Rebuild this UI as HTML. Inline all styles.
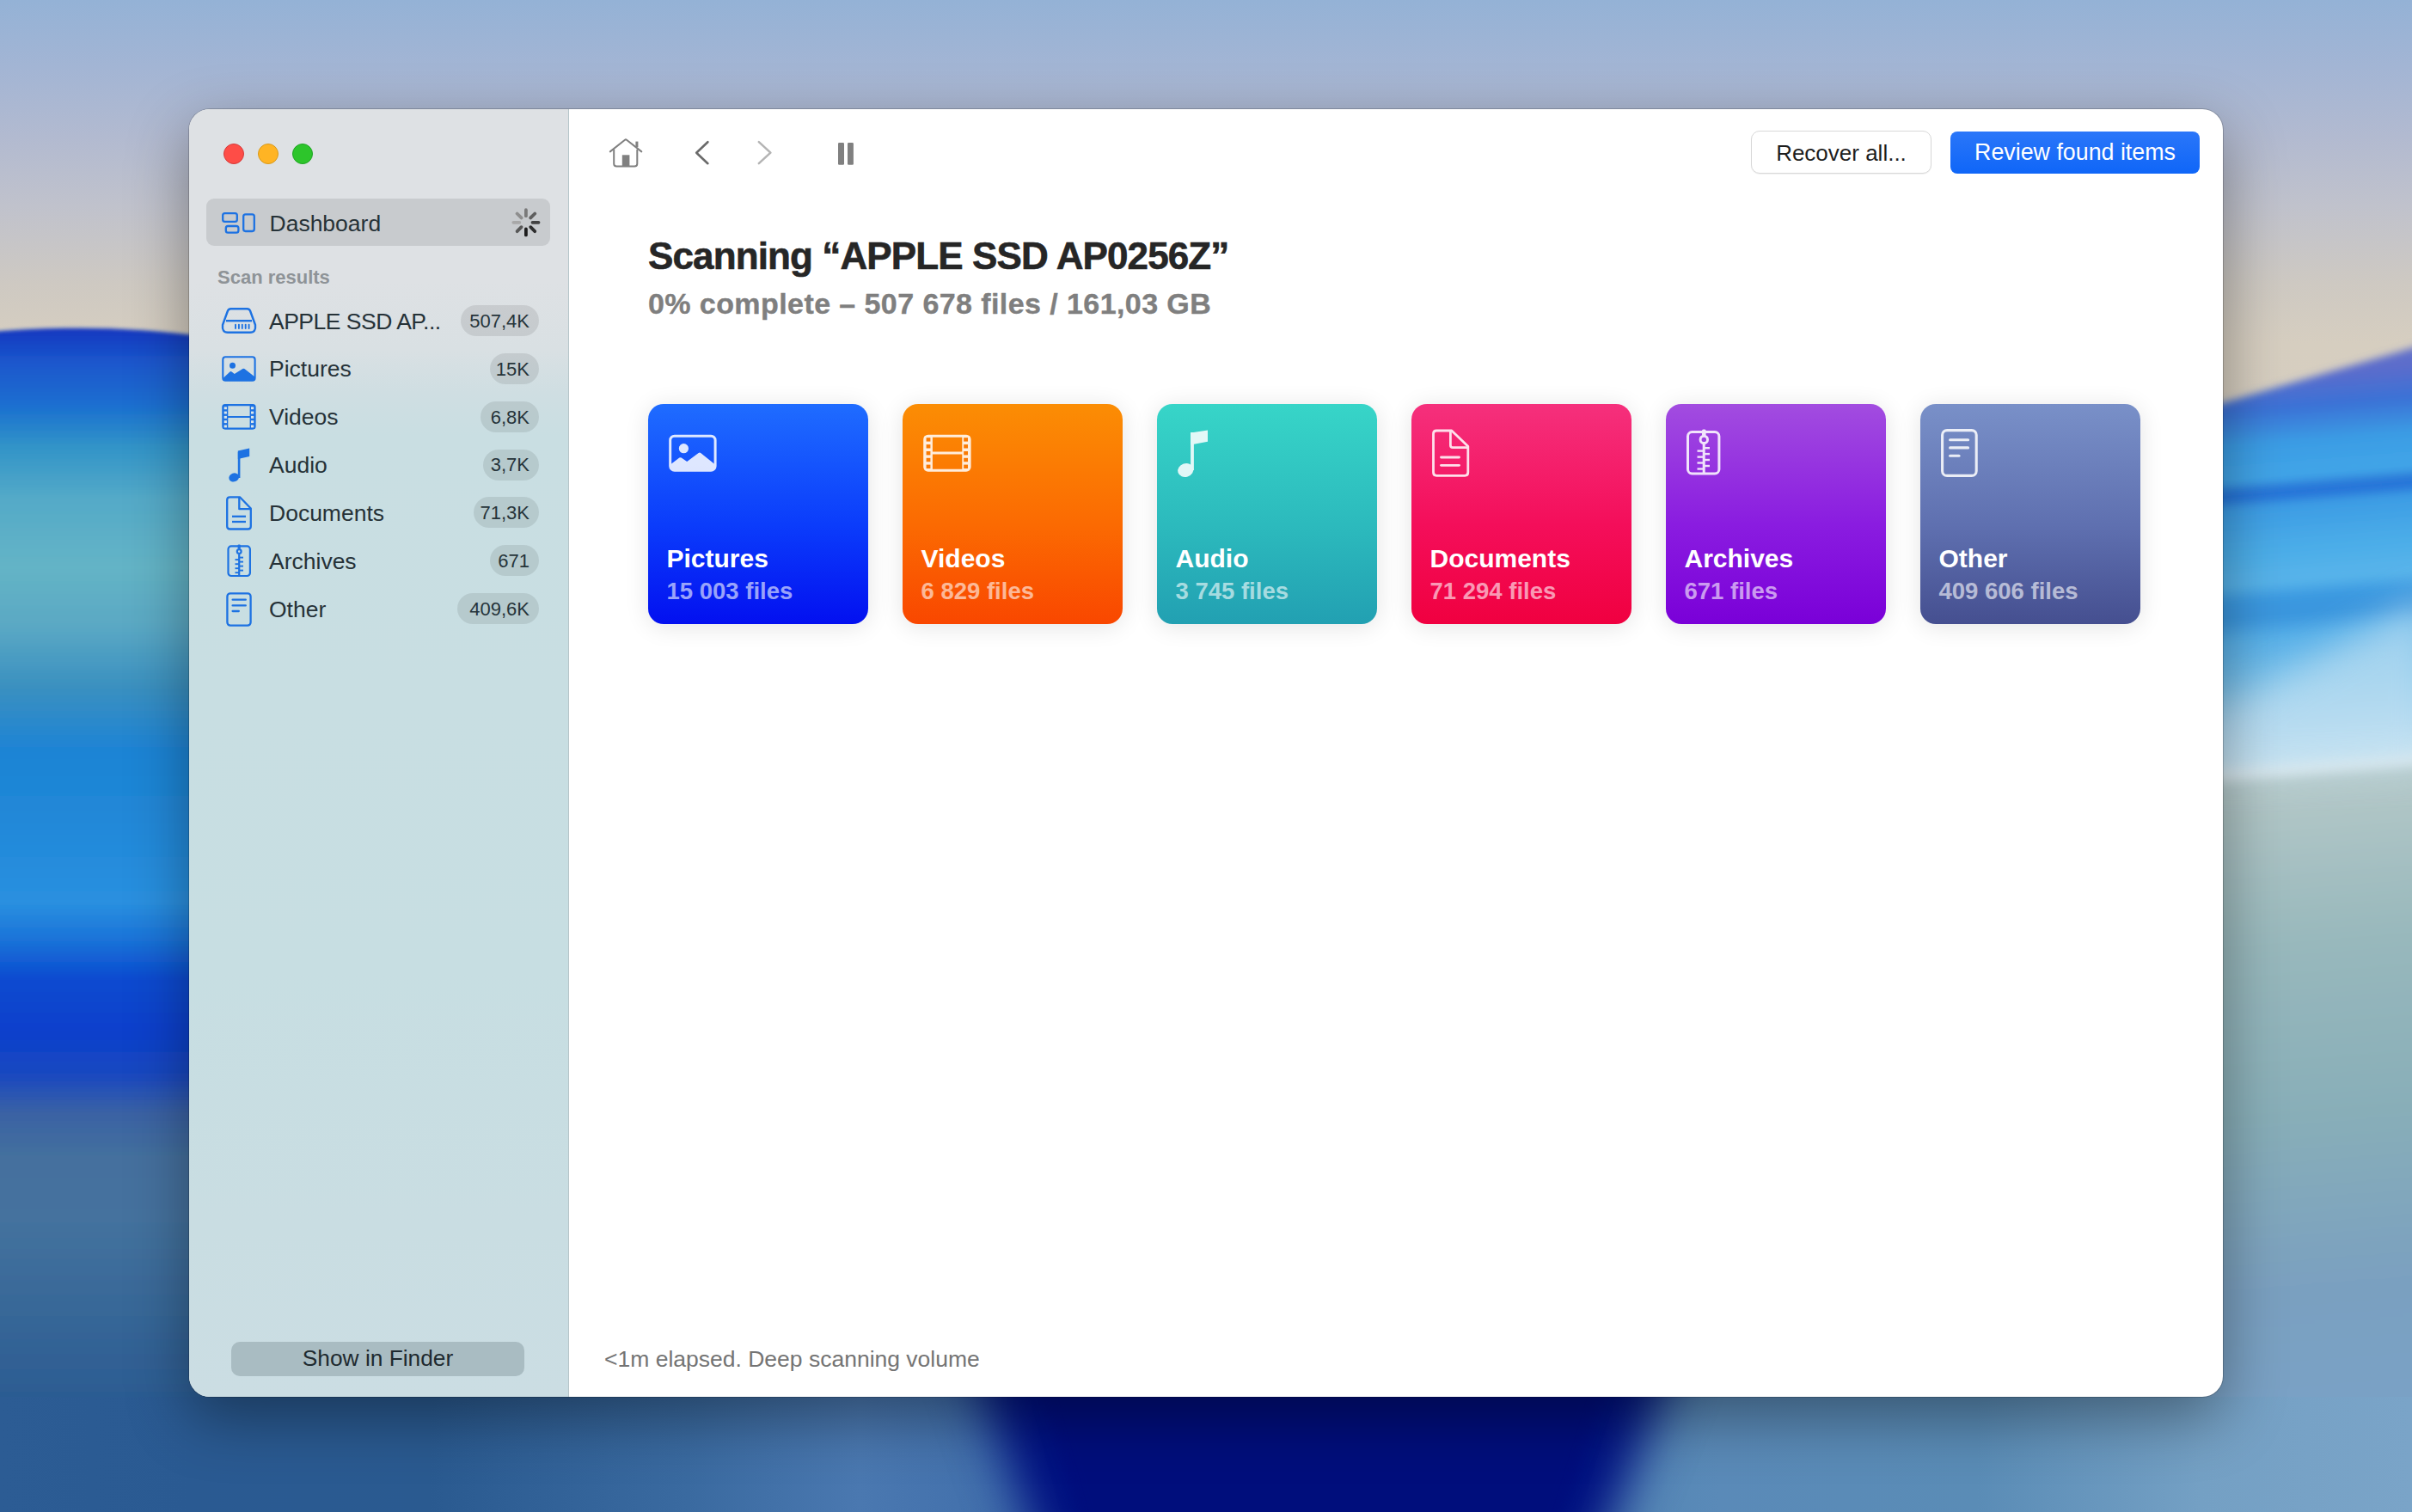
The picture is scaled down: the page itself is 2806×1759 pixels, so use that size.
<!DOCTYPE html>
<html><head><meta charset="utf-8">
<style>
*{margin:0;padding:0;box-sizing:border-box}
html,body{width:2806px;height:1759px;overflow:hidden;font-family:"Liberation Sans",sans-serif}
body{position:relative;background:#a8b8d2}
.abs{position:absolute}
.t{position:absolute;white-space:nowrap;line-height:1}
#wp-top{left:0;top:0;width:2806px;height:520px;background:linear-gradient(180deg,#93b1d6 0px,#a3b5d4 110px,#b4bbd0 190px,#c4c4cc 270px,#d4ccc0 370px,#d8cfc0 520px)}
#wp-left{left:0;top:383px;width:420px;height:1376px;background:linear-gradient(180deg,#1e3ec4 0px,#1b58cc 40px,#1a70d0 110px,#4aa0cc 220px,#64b2c6 300px,#5aa8c4 380px,#3690c8 470px,#2088d8 560px,#2a90e0 690px,#1a66d8 760px,#0a40d0 830px,#1a4cbc 900px,#3e6aa8 960px,#4a78a8 1040px,#3a6a9c 1160px,#2a5a90 1260px,#1f4e88 1376px)}
#wp-right{left:2400px;top:300px;width:406px;height:1459px;background:linear-gradient(180deg,#2a56d0 150px,#2a80e0 200px,#34a2e8 240px,#1a70d8 268px,#40a8e8 310px,#60b8e8 380px,#90cbee 500px,#bfe0f2 577px,#e6eef0 600px,#aec4c4 615px,#98b8bc 880px,#88aeb8 1080px,#7aa0c4 1280px,#7aa2ca 1459px);clip-path:polygon(0 169px,100% 105px,100% 100%,0 100%)}
#wp-bottom{left:0;top:1600px;width:2806px;height:159px;background:linear-gradient(90deg,#24528c 0px,#2a5a90 500px,#3a6aa0 900px,#4a78b0 1080px,#2a44a0 1150px,#041a88 1200px,#001080 1300px,#001080 1800px,#0a2090 1860px,#4a7ab0 1930px,#5a8ab8 2000px,#4a80a8 2300px,#7aa4c8 2806px)}
#win{left:220px;top:127px;width:2366px;height:1498px;border-radius:24px;overflow:hidden;background:#fff;box-shadow:0 0 0 1px rgba(0,0,0,.18),0 24px 70px rgba(0,0,0,.38)}
#side{left:0;top:0;width:442px;height:1498px;background:linear-gradient(180deg,#dee1e4 0px,#dee1e4 200px,#d9e0e3 280px,#cfdee2 330px,#c9dee2 380px,#c7dee2 1000px,#c9dde2 1300px,#cbdde3 1498px);border-right:1.5px solid #b6c5c9}
.tl{position:absolute;width:24px;height:24px;border-radius:50%;top:167px}
.badge{position:absolute;height:36px;border-radius:18px;background:rgba(0,0,0,.09)}
.card{position:absolute;top:470px;width:256px;height:256px;border-radius:18px;box-shadow:0 3px 28px rgba(0,0,0,.11)}
.btn{position:absolute}
svg{position:absolute;left:0;top:0}
</style></head>
<body>
<svg class="wp" width="2806" height="1759" viewBox="0 0 2806 1759" style="position:absolute;left:0;top:0"><defs><linearGradient id="gsky" gradientUnits="userSpaceOnUse" x1="0" y1="0" x2="0" y2="600"><stop offset="0.0000" stop-color="#94b2d6"/><stop offset="0.1333" stop-color="#a3b5d4"/><stop offset="0.2667" stop-color="#b2bad0"/><stop offset="0.4000" stop-color="#c0c2cc"/><stop offset="0.5500" stop-color="#cec9c2"/><stop offset="0.6667" stop-color="#d6cec0"/><stop offset="1.0000" stop-color="#d8cfc0"/></linearGradient><linearGradient id="gleft" gradientUnits="userSpaceOnUse" x1="0" y1="383" x2="0" y2="1759"><stop offset="0.0000" stop-color="#1838c0"/><stop offset="0.0269" stop-color="#1a56cc"/><stop offset="0.0632" stop-color="#1a6ed0"/><stop offset="0.0996" stop-color="#3294c8"/><stop offset="0.1432" stop-color="#54aac8"/><stop offset="0.2013" stop-color="#64b4c6"/><stop offset="0.2522" stop-color="#5aa8c4"/><stop offset="0.3031" stop-color="#3a90c0"/><stop offset="0.3539" stop-color="#1f84d4"/><stop offset="0.4121" stop-color="#2088d8"/><stop offset="0.4847" stop-color="#2a90e0"/><stop offset="0.5174" stop-color="#1a72d8"/><stop offset="0.5501" stop-color="#0a4ad0"/><stop offset="0.5938" stop-color="#0a40cc"/><stop offset="0.6301" stop-color="#1a48c0"/><stop offset="0.6628" stop-color="#3a62a4"/><stop offset="0.6991" stop-color="#44709e"/><stop offset="0.7536" stop-color="#44729e"/><stop offset="0.8263" stop-color="#386898"/><stop offset="0.9026" stop-color="#2c5c92"/><stop offset="1.0000" stop-color="#24528c"/></linearGradient><linearGradient id="gright" gradientUnits="userSpaceOnUse" x1="2586" y1="405" x2="2694" y2="1759"><stop offset="0.0000" stop-color="#6a74c6"/><stop offset="0.0295" stop-color="#5a6ccc"/><stop offset="0.0554" stop-color="#3a72d6"/><stop offset="0.0849" stop-color="#3a9ce4"/><stop offset="0.1145" stop-color="#42a6e8"/><stop offset="0.1226" stop-color="#2a7ad8"/><stop offset="0.1292" stop-color="#2470d8"/><stop offset="0.1381" stop-color="#3c9ce4"/><stop offset="0.1736" stop-color="#4aace8"/><stop offset="0.2031" stop-color="#58b4ea"/><stop offset="0.2179" stop-color="#3a98e0"/><stop offset="0.2326" stop-color="#3a96de"/><stop offset="0.2511" stop-color="#58b0e8"/><stop offset="0.2917" stop-color="#78c0ea"/><stop offset="0.3287" stop-color="#a0d0ee"/><stop offset="0.3523" stop-color="#c2e0f0"/><stop offset="0.3641" stop-color="#dfe9ec"/><stop offset="0.3744" stop-color="#b4c8c8"/><stop offset="0.5133" stop-color="#98b8bc"/><stop offset="0.6610" stop-color="#88aeb8"/><stop offset="0.8087" stop-color="#7aa0c0"/><stop offset="1.0000" stop-color="#7aa2ca"/></linearGradient><linearGradient id="gbot" gradientUnits="userSpaceOnUse" x1="0" y1="0" x2="2806" y2="0"><stop offset="0.0000" stop-color="#2c5c94"/><stop offset="0.0784" stop-color="#2a5a92"/><stop offset="0.1782" stop-color="#2a5a90"/><stop offset="0.2851" stop-color="#3a6aa0"/><stop offset="0.3564" stop-color="#4a78b0"/><stop offset="0.4633" stop-color="#3a68a8"/><stop offset="0.6058" stop-color="#4a80b0"/><stop offset="0.7128" stop-color="#5a8ab8"/><stop offset="0.8197" stop-color="#5a8cb6"/><stop offset="0.9123" stop-color="#74a0c4"/><stop offset="1.0000" stop-color="#7aa4c8"/></linearGradient><filter id="b2" x="-10%" y="-10%" width="120%" height="120%"><feGaussianBlur stdDeviation="2"/></filter><filter id="b5" x="-10%" y="-10%" width="120%" height="120%"><feGaussianBlur stdDeviation="5"/></filter><filter id="b20" x="-30%" y="-30%" width="160%" height="160%"><feGaussianBlur stdDeviation="22"/></filter><linearGradient id="gfade" gradientUnits="userSpaceOnUse" x1="0" y1="1605" x2="0" y2="1665"><stop offset="0" stop-color="#fff" stop-opacity="0"/><stop offset="1" stop-color="#fff" stop-opacity="1"/></linearGradient><mask id="mfade" maskUnits="userSpaceOnUse" x="-50" y="1500" width="2950" height="300"><rect x="-50" y="1500" width="2950" height="300" fill="url(#gfade)"/></mask><filter id="b30" x="-30%" y="-50%" width="160%" height="200%"><feGaussianBlur stdDeviation="32"/></filter></defs><rect x="0" y="0" width="2806" height="1759" fill="url(#gsky)"/><rect x="-20" y="1450" width="2850" height="330" fill="url(#gbot)"/><path d="M-20 387 C 60 379, 160 380, 240 392 L 1000 470 L 1000 1800 L -20 1800 Z" fill="url(#gleft)" filter="url(#b2)"/><path d="M2100 610 L 2830 398 L 2830 1800 L 2100 1800 Z" fill="url(#gright)" filter="url(#b5)"/><rect x="-20" y="1625" width="2850" height="160" fill="url(#gbot)"/></svg>
<div style="position:absolute;left:900px;top:1400px;width:1300px;height:500px;filter:blur(28px)"><div style="position:absolute;left:0;top:0;width:1300px;height:500px;background:#001080;clip-path:polygon(215px 140px,1065px 140px,955px 420px,315px 420px)"></div></div>
<div style="position:absolute;left:900px;top:1400px;width:1300px;height:500px;filter:blur(8px)"><div style="position:absolute;left:0;top:0;width:1300px;height:500px;background:#000e7c;clip-path:polygon(300px 160px,980px 160px,900px 420px,370px 420px)"></div></div>
<div style="position:absolute;left:2400px;top:600px;width:500px;height:400px;filter:blur(22px);opacity:.65"><div style="position:absolute;left:0;top:0;width:500px;height:400px;background:#c4e2f2;clip-path:polygon(160px 240px,430px 90px,430px 290px,160px 300px)"></div></div>
<div id="win" class="abs">
  <div id="side" class="abs"></div>
</div>
<div class="tl" style="left:260px;background:#fe4d47;border:1px solid #d53a3a"></div>
<div class="tl" style="left:300px;background:#ffb424;border:1px solid #d99a1a"></div>
<div class="tl" style="left:340px;background:#2dc52b;border:1px solid #1ea523"></div>
<div class="abs" style="left:240px;top:231px;width:400px;height:55px;border-radius:9px;background:#c8cbce"></div>
<div class="t " style="left:313.50px;top:246.87px;font-size:26.5px;color:#263238;">Dashboard</div>
<div class="t " style="left:253.00px;top:312.08px;font-size:22px;color:#8e9397;font-weight:bold;">Scan results</div>
<div class="t " style="left:313.00px;top:360.57px;font-size:26.5px;color:#263238;letter-spacing:-0.5px;">APPLE SSD AP...</div>
<div class="badge" style="left:536px;top:355.00px;width:91px"></div>
<div class="t " style="left:0.00px;top:362.88px;font-size:22px;color:#26343a;right:2190px;left:auto;">507,4K</div>
<div class="t " style="left:313.00px;top:416.42px;font-size:26.5px;color:#263238;">Pictures</div>
<div class="badge" style="left:570px;top:410.85px;width:57px"></div>
<div class="t " style="left:0.00px;top:418.73px;font-size:22px;color:#26343a;right:2190px;left:auto;">15K</div>
<div class="t " style="left:313.00px;top:472.27px;font-size:26.5px;color:#263238;">Videos</div>
<div class="badge" style="left:559px;top:466.70px;width:68px"></div>
<div class="t " style="left:0.00px;top:474.58px;font-size:22px;color:#26343a;right:2190px;left:auto;">6,8K</div>
<div class="t " style="left:313.00px;top:528.12px;font-size:26.5px;color:#263238;">Audio</div>
<div class="badge" style="left:562px;top:522.55px;width:65px"></div>
<div class="t " style="left:0.00px;top:530.43px;font-size:22px;color:#26343a;right:2190px;left:auto;">3,7K</div>
<div class="t " style="left:313.00px;top:583.97px;font-size:26.5px;color:#263238;">Documents</div>
<div class="badge" style="left:551px;top:578.40px;width:76px"></div>
<div class="t " style="left:0.00px;top:586.28px;font-size:22px;color:#26343a;right:2190px;left:auto;">71,3K</div>
<div class="t " style="left:313.00px;top:639.82px;font-size:26.5px;color:#263238;">Archives</div>
<div class="badge" style="left:570px;top:634.25px;width:57px"></div>
<div class="t " style="left:0.00px;top:642.13px;font-size:22px;color:#26343a;right:2190px;left:auto;">671</div>
<div class="t " style="left:313.00px;top:695.67px;font-size:26.5px;color:#263238;">Other</div>
<div class="badge" style="left:532px;top:690.10px;width:95px"></div>
<div class="t " style="left:0.00px;top:697.98px;font-size:22px;color:#26343a;right:2190px;left:auto;">409,6K</div>
<div class="abs" style="left:269px;top:1561px;width:341px;height:40px;border-radius:10px;background:#a9bcc2"></div>
<div class="t " style="left:0.00px;top:1566.54px;font-size:26.3px;color:#1e2a30;left:269px;width:341px;text-align:center;">Show in Finder</div>
<div class="t " style="left:754.00px;top:275.75px;font-size:44px;color:#262626;font-weight:bold;letter-spacing:-0.88px;-webkit-text-stroke:0.6px #262626;">Scanning “APPLE SSD AP0256Z”</div>
<div class="t " style="left:754.00px;top:335.72px;font-size:34px;color:#7f7f7f;font-weight:bold;letter-spacing:0.42px;-webkit-text-stroke:0.4px #7f7f7f;">0% complete – 507 678 files / 161,03 GB</div>
<div class="abs" style="left:2037px;top:152px;width:210px;height:50px;border-radius:10px;background:#fff;border:1px solid #d8d8d8;box-shadow:0 1px 1px rgba(0,0,0,.06)"></div>
<div class="t " style="left:0.00px;top:164.79px;font-size:26px;color:#1e1e1e;left:2037px;width:210px;text-align:center;">Recover all...</div>
<div class="abs" style="left:2269px;top:153px;width:290px;height:49px;border-radius:8px;background:linear-gradient(180deg,#2a76f9,#0f66f8)"></div>
<div class="t " style="left:0.00px;top:164.31px;font-size:26.8px;color:#ffffff;left:2269px;width:290px;text-align:center;">Review found items</div>
<div class="t " style="left:703.00px;top:1568.07px;font-size:26.5px;color:#747474;">&lt;1m elapsed. Deep scanning volume</div>
<div class="card" style="left:754px;background:linear-gradient(180deg,#1f6cff 0%,#0b3cfb 55%,#0310f0 100%)"></div>
<div class="t " style="left:775.50px;top:635.31px;font-size:30px;color:#ffffff;font-weight:bold;">Pictures</div>
<div class="t " style="left:775.50px;top:673.72px;font-size:27.5px;color:rgba(255,255,255,.6);font-weight:bold;">15 003 files</div>
<div class="card" style="left:1050px;background:linear-gradient(180deg,#fb8d04 0%,#fb6a02 55%,#f94700 100%)"></div>
<div class="t " style="left:1071.50px;top:635.31px;font-size:30px;color:#ffffff;font-weight:bold;">Videos</div>
<div class="t " style="left:1071.50px;top:673.72px;font-size:27.5px;color:rgba(255,255,255,.6);font-weight:bold;">6 829 files</div>
<div class="card" style="left:1346px;background:linear-gradient(180deg,#37d5c8 0%,#2cbabd 55%,#22a0b2 100%)"></div>
<div class="t " style="left:1367.50px;top:635.31px;font-size:30px;color:#ffffff;font-weight:bold;">Audio</div>
<div class="t " style="left:1367.50px;top:673.72px;font-size:27.5px;color:rgba(255,255,255,.6);font-weight:bold;">3 745 files</div>
<div class="card" style="left:1642px;background:linear-gradient(180deg,#f5307c 0%,#f40e5a 55%,#f00040 100%)"></div>
<div class="t " style="left:1663.50px;top:635.31px;font-size:30px;color:#ffffff;font-weight:bold;">Documents</div>
<div class="t " style="left:1663.50px;top:673.72px;font-size:27.5px;color:rgba(255,255,255,.6);font-weight:bold;">71 294 files</div>
<div class="card" style="left:1938px;background:linear-gradient(180deg,#a24ce0 0%,#8a1ce0 55%,#7a00d8 100%)"></div>
<div class="t " style="left:1959.50px;top:635.31px;font-size:30px;color:#ffffff;font-weight:bold;">Archives</div>
<div class="t " style="left:1959.50px;top:673.72px;font-size:27.5px;color:rgba(255,255,255,.6);font-weight:bold;">671 files</div>
<div class="card" style="left:2234px;background:linear-gradient(180deg,#7990c8 0%,#5f70b0 55%,#454f90 100%)"></div>
<div class="t " style="left:2255.50px;top:635.31px;font-size:30px;color:#ffffff;font-weight:bold;">Other</div>
<div class="t " style="left:2255.50px;top:673.72px;font-size:27.5px;color:rgba(255,255,255,.6);font-weight:bold;">409 606 files</div>
<svg width="2806" height="1759" viewBox="0 0 2806 1759"><g fill="none" stroke="#1d72e2" stroke-width="2.3"><rect x="259.2" y="248.2" width="16.6" height="9.6" rx="2.4"/><rect x="262.8" y="263" width="14.6" height="7.6" rx="2.4"/><rect x="283.2" y="249.4" width="12.6" height="19.6" rx="2.4"/></g><line x1="611.90" y1="266.40" x2="611.90" y2="273.40" stroke="#1e1e1e" stroke-width="3.8" stroke-linecap="round"/><line x1="617.27" y1="264.17" x2="622.22" y2="269.12" stroke="#2e2e2e" stroke-width="3.8" stroke-linecap="round"/><line x1="619.50" y1="258.80" x2="626.50" y2="258.80" stroke="#424242" stroke-width="3.8" stroke-linecap="round"/><line x1="617.27" y1="253.43" x2="622.22" y2="248.48" stroke="#5e5e5e" stroke-width="3.8" stroke-linecap="round"/><line x1="611.90" y1="251.20" x2="611.90" y2="244.20" stroke="#7a7a7a" stroke-width="3.8" stroke-linecap="round"/><line x1="606.53" y1="253.43" x2="601.58" y2="248.48" stroke="#8e8e8e" stroke-width="3.8" stroke-linecap="round"/><line x1="604.30" y1="258.80" x2="597.30" y2="258.80" stroke="#a8a8a8" stroke-width="3.8" stroke-linecap="round"/><line x1="606.53" y1="264.17" x2="601.58" y2="269.12" stroke="#585858" stroke-width="3.8" stroke-linecap="round"/><g fill="none" stroke="#1d72e2" stroke-width="2.4" stroke-linejoin="round"><path d="M268.5 359.2 L287.5 359.2 Q290 359.2 291 361.5 L297 378 Q298 386.8 291 386.8 L265 386.8 Q258 386.8 259 378 L265 361.5 Q266 359.2 268.5 359.2 Z"/><line x1="263" y1="373.2" x2="293" y2="373.2"/></g><g stroke="#1d72e2" stroke-width="1.9" stroke-linecap="round"><line x1="274" y1="377.8" x2="274" y2="382"/><line x1="277.9" y1="377.8" x2="277.9" y2="382"/><line x1="281.8" y1="377.8" x2="281.8" y2="382"/><line x1="285.7" y1="377.8" x2="285.7" y2="382"/><line x1="289.6" y1="377.8" x2="289.6" y2="382"/></g><rect x="259.3" y="415.3" width="37.3" height="27.4" rx="3" fill="none" stroke="#1d72e2" stroke-width="2.1"/><circle cx="270.5" cy="425.2" r="3.5" fill="#1d72e2"/><path d="M259.5 440 L267.5 432.4 Q268.5 431.6 269.5 432.4 L272.8 435 L282.4 429 Q283.4 428.4 284.4 429 L296.5 438.6 L296.5 440.5 Q296.5 443 294 443 L262 443 Q259.5 443 259.5 440.5 Z" fill="#1d72e2"/><rect x="259.3" y="471.1" width="37.3" height="27.5" rx="2.5" fill="none" stroke="#1d72e2" stroke-width="2.1"/><rect x="259.3" y="471.1" width="6" height="27.5" fill="#1d72e2"/><rect x="290.6" y="471.1" width="6" height="27.5" fill="#1d72e2"/><line x1="265" y1="485" x2="291" y2="485" stroke="#1d72e2" stroke-width="2"/><rect x="260.7" y="473.3" width="3.2" height="2.9" fill="#dbe6ea"/><rect x="292" y="473.3" width="3.2" height="2.9" fill="#dbe6ea"/><rect x="260.7" y="478.6" width="3.2" height="2.9" fill="#dbe6ea"/><rect x="292" y="478.6" width="3.2" height="2.9" fill="#dbe6ea"/><rect x="260.7" y="483.9" width="3.2" height="2.9" fill="#dbe6ea"/><rect x="292" y="483.9" width="3.2" height="2.9" fill="#dbe6ea"/><rect x="260.7" y="489.2" width="3.2" height="2.9" fill="#dbe6ea"/><rect x="292" y="489.2" width="3.2" height="2.9" fill="#dbe6ea"/><rect x="260.7" y="494.5" width="3.2" height="2.9" fill="#dbe6ea"/><rect x="292" y="494.5" width="3.2" height="2.9" fill="#dbe6ea"/><ellipse cx="272.2" cy="555.4" rx="6" ry="5" transform="rotate(-20 272.2 555.4)" fill="#1d72e2"/><rect x="276.8" y="526" width="2.6" height="30" fill="#1d72e2"/><path d="M276.8 524.4 L290.2 521.4 L290.2 531 L276.8 534 Z" fill="#1d72e2"/><g fill="none" stroke="#1d72e2" stroke-width="2.3" stroke-linejoin="round"><path d="M279 578.3 L267.5 578.3 Q264.2 578.3 264.2 581.6 L264.2 612.2 Q264.2 615.5 267.5 615.5 L288.5 615.5 Q291.8 615.5 291.8 612.2 L291.8 591.5 Z"/><path d="M278.3 578.5 L278.3 592.2 L291.6 592.2"/><line x1="270" y1="600.8" x2="286" y2="600.8"/><line x1="270" y1="607" x2="286" y2="607"/></g><g fill="none" stroke="#1d72e2" stroke-width="2.2"><rect x="265.5" y="635.4" width="25.4" height="34.6" rx="3.5"/><line x1="278.2" y1="645" x2="278.2" y2="670"/><circle cx="278.2" cy="641.6" r="2.4"/></g><rect x="276.6" y="633.5" width="3.2" height="5" rx="1" fill="#1d72e2"/><g stroke="#1d72e2" stroke-width="1.9"><line x1="273.5" y1="651.1" x2="278.2" y2="651.1"/><line x1="273.5" y1="656.2" x2="278.2" y2="656.2"/><line x1="273.5" y1="661.2" x2="278.2" y2="661.2"/><line x1="273.5" y1="666.2" x2="278.2" y2="666.2"/><line x1="278.2" y1="648.6" x2="283" y2="648.6"/><line x1="278.2" y1="653.6" x2="283" y2="653.6"/><line x1="278.2" y1="658.6" x2="283" y2="658.6"/><line x1="278.2" y1="663.6" x2="283" y2="663.6"/></g><g fill="none" stroke="#1d72e2" stroke-width="2.3" stroke-linecap="round"><rect x="264.4" y="690.4" width="27.2" height="37.2" rx="3.5"/><line x1="270.6" y1="697.7" x2="285.8" y2="697.7"/><line x1="270.6" y1="704.4" x2="285.8" y2="704.4"/><line x1="270.6" y1="711" x2="277.8" y2="711"/></g><g fill="none" stroke="#808080" stroke-width="2" stroke-linecap="round" stroke-linejoin="round"><path d="M709.8 176.4 L727 162.8 Q728 162 729 162.8 L746.3 176.4"/><path d="M714.2 174.5 L714.2 190.5 Q714.2 193.6 717.3 193.6 L738.2 193.6 Q741.3 193.6 741.3 190.5 L741.3 174.5"/></g><rect x="723.8" y="180.3" width="8.6" height="13" fill="#808080"/><rect x="739.4" y="164.6" width="3" height="6.5" fill="#808080"/><path d="M823.4 165.2 L810.2 177.7 L823.4 190.2" fill="none" stroke="#6a6a6a" stroke-width="2.6" stroke-linecap="round" stroke-linejoin="round"/><path d="M882.8 165.2 L896.4 177.7 L882.8 190.2" fill="none" stroke="#b4b4b4" stroke-width="2.5" stroke-linecap="round" stroke-linejoin="round"/><rect x="975" y="166.1" width="7" height="25.7" rx="1.2" fill="#808080"/><rect x="986" y="166.1" width="6.9" height="25.7" rx="1.2" fill="#808080"/><g opacity=".86"><g transform="translate(0 0)"><rect x="779.7" y="507.2" width="52.4" height="40" rx="5" fill="none" stroke="#ffffff" stroke-width="3"/><circle cx="795.4" cy="521.7" r="5.6" fill="#ffffff"/><path d="M780.5 540 L790.3 532.6 Q791.5 531.8 792.7 532.6 L799.2 537.1 L812.6 527 Q813.9 526.2 815.2 527 L831.4 540 L831.4 542.5 Q831.4 547.5 826.4 547.5 L785.5 547.5 Q780.5 547.5 780.5 542.5 Z" fill="#ffffff"/></g><g transform="translate(-296 0)"></g><rect x="1075.7" y="507.2" width="52.4" height="40" rx="4" fill="none" stroke="#ffffff" stroke-width="3"/><rect x="1075.7" y="507.2" width="9.2" height="40" fill="#ffffff"/><rect x="1119.3" y="507.2" width="8.8" height="40" fill="#ffffff"/><line x1="1084" y1="527" x2="1120" y2="527" stroke="#ffffff" stroke-width="3"/><rect x="1077.6" y="509.2" width="4.8" height="4.4" fill="#fa7a03"/><rect x="1121.2" y="509.2" width="4.8" height="4.4" fill="#fa7a03"/><rect x="1077.6" y="517.1" width="4.8" height="4.4" fill="#fa7a03"/><rect x="1121.2" y="517.1" width="4.8" height="4.4" fill="#fa7a03"/><rect x="1077.6" y="525" width="4.8" height="4.4" fill="#fa7a03"/><rect x="1121.2" y="525" width="4.8" height="4.4" fill="#fa7a03"/><rect x="1077.6" y="532.8" width="4.8" height="4.4" fill="#fa7a03"/><rect x="1121.2" y="532.8" width="4.8" height="4.4" fill="#fa7a03"/><rect x="1077.6" y="540.6" width="4.8" height="4.4" fill="#fa7a03"/><rect x="1121.2" y="540.6" width="4.8" height="4.4" fill="#fa7a03"/><ellipse cx="1379.3" cy="547" rx="9.3" ry="7.8" transform="rotate(-18 1379.3 547)" fill="#ffffff"/><rect x="1385.1" y="503" width="3.8" height="44" fill="#ffffff"/><path d="M1385.1 503.6 L1405 500.6 L1405 513.8 L1385.1 517.5 Z" fill="#ffffff"/><g fill="none" stroke="#ffffff" stroke-width="2.8" stroke-linejoin="round" stroke-linecap="round"><path d="M1688.8 501 L1671.2 501 Q1667.5 501 1667.5 504.7 L1667.5 549.6 Q1667.5 553.4 1671.2 553.4 L1704.1 553.4 Q1707.8 553.4 1707.8 549.6 L1707.8 519.3 Z"/><path d="M1687.4 501.5 L1687.4 518 Q1687.4 520.7 1690 520.7 L1707.4 520.7"/><line x1="1676.5" y1="532" x2="1697.5" y2="532"/><line x1="1676.5" y1="541.3" x2="1697.5" y2="541.3"/></g><g fill="none" stroke="#ffffff" stroke-width="3"><rect x="1963.5" y="502.5" width="36.4" height="48.5" rx="5"/><line x1="1982.2" y1="516" x2="1982.2" y2="551"/><circle cx="1982.3" cy="511.4" r="4.2"/></g><rect x="1980" y="499.4" width="4.6" height="8" rx="1.5" fill="#ffffff"/><g stroke="#ffffff" stroke-width="2.4"><line x1="1974.5" y1="524.6" x2="1982.2" y2="524.6"/><line x1="1974.5" y1="531.6" x2="1982.2" y2="531.6"/><line x1="1974.5" y1="538.5" x2="1982.2" y2="538.5"/><line x1="1974.5" y1="545.5" x2="1982.2" y2="545.5"/><line x1="1982.2" y1="521.2" x2="1989" y2="521.2"/><line x1="1982.2" y1="528.1" x2="1989" y2="528.1"/><line x1="1982.2" y1="535" x2="1989" y2="535"/><line x1="1982.2" y1="542" x2="1989" y2="542"/></g><g fill="none" stroke="#ffffff" stroke-width="3.1" stroke-linecap="round"><rect x="2259.6" y="500.6" width="39.6" height="52.8" rx="5.5"/><line x1="2268.6" y1="511.7" x2="2289.6" y2="511.7"/><line x1="2268.6" y1="520.9" x2="2289.6" y2="520.9"/><line x1="2268.6" y1="530.2" x2="2279" y2="530.2"/></g></g></svg>
</body></html>
